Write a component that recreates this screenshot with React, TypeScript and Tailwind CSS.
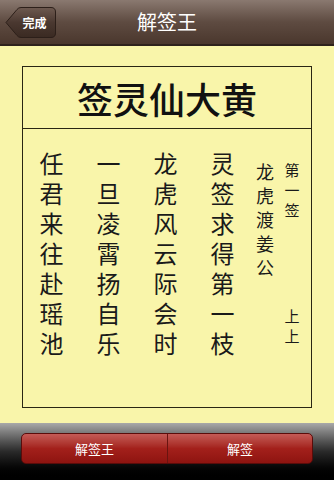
import React from 'react'

const font = { fontFamily: '"Noto Sans CJK SC", "Noto Sans", sans-serif' }

const poem = [
  ['任', '君', '来', '往', '赴', '瑶', '池'],
  ['一', '旦', '凌', '霄', '扬', '自', '乐'],
  ['龙', '虎', '风', '云', '际', '会', '时'],
  ['灵', '签', '求', '得', '第', '一', '枝'],
]

function BackButton() {
  return (
    <div className="relative h-[31px] w-[51px]">
      <svg width="51" height="31" viewBox="0 0 51 31" className="absolute inset-0">
        <defs>
          <linearGradient id="bb" x1="0" y1="0" x2="0" y2="1">
            <stop offset="0" stopColor="#6e5a50" />
            <stop offset="0.5" stopColor="#4a3830" />
            <stop offset="1" stopColor="#3a2a22" />
          </linearGradient>
        </defs>
        <path
          d="M1 15.5 L12 2.5 Q13.5 0.5 16 0.5 L46 0.5 Q50.5 0.5 50.5 5 L50.5 26 Q50.5 30.5 46 30.5 L16 30.5 Q13.5 30.5 12 28.5 Z"
          fill="url(#bb)"
          stroke="#2c1f19"
        />
      </svg>
      <span className="absolute inset-0 flex items-center justify-center pl-[8px] text-[12px] font-bold text-white">
        完成
      </span>
    </div>
  )
}

export default function App() {
  return (
    <div className="flex h-[480px] w-[334px] flex-col overflow-hidden bg-[#f9f5aa]" style={font}>
      <div className="relative flex h-[46px] shrink-0 items-center justify-center border-b-2 border-[#2e221c] bg-gradient-to-b from-[#8a7970] via-[#5e4b41] to-[#4a372d]">
        <div className="absolute left-[5px] top-[7px]">
          <BackButton />
        </div>
        <span className="text-[20px] text-white">解签王</span>
      </div>

      <div className="flex flex-1 flex-col px-[22px] pb-[15px] pt-[20px]">
        <div className="flex flex-1 flex-col border-[1.5px] border-[#2a2614]">
          <div className="flex h-[62px] items-center justify-center border-b-[1.5px] border-[#2a2614] text-[36px] font-medium leading-none text-[#111]">
            签灵仙大黄
          </div>
          <div className="flex flex-1 text-[#1a1a1a]">
            {poem.map((col, i) => (
              <div key={i} className="flex w-[57px] flex-col items-center pt-[19px] text-[24px] leading-[30px]">
                {col.map((c, j) => (
                  <span key={j}>{c}</span>
                ))}
              </div>
            ))}
            <div className="flex w-[28px] flex-col items-center pt-[30px] text-[18px] leading-[24px]">
              {['龙', '虎', '渡', '姜', '公'].map((c, j) => (
                <span key={j}>{c}</span>
              ))}
            </div>
            <div className="flex w-[26px] flex-col items-center pt-[31px] text-[15px] leading-[20px]">
              <span>第</span>
              <span>一</span>
              <span>签</span>
              <span className="mt-[86px]">上</span>
              <span>上</span>
            </div>
          </div>
        </div>
      </div>

      <div className="flex h-[57px] shrink-0 items-start bg-gradient-to-b from-[#a9a9a9] via-[#2a2a2a] to-black px-[21px] pt-[10px]">
        <div className="flex h-[31px] flex-1 overflow-hidden rounded-[5px] border border-[#5a0c0a] bg-gradient-to-b from-[#c45a56] via-[#a3201b] to-[#8e1410] text-[13px] text-white">
          <div className="flex w-[146px] items-center justify-center border-r border-[#6a1410]">解签王</div>
          <div className="flex flex-1 items-center justify-center">解签</div>
        </div>
      </div>
    </div>
  )
}
